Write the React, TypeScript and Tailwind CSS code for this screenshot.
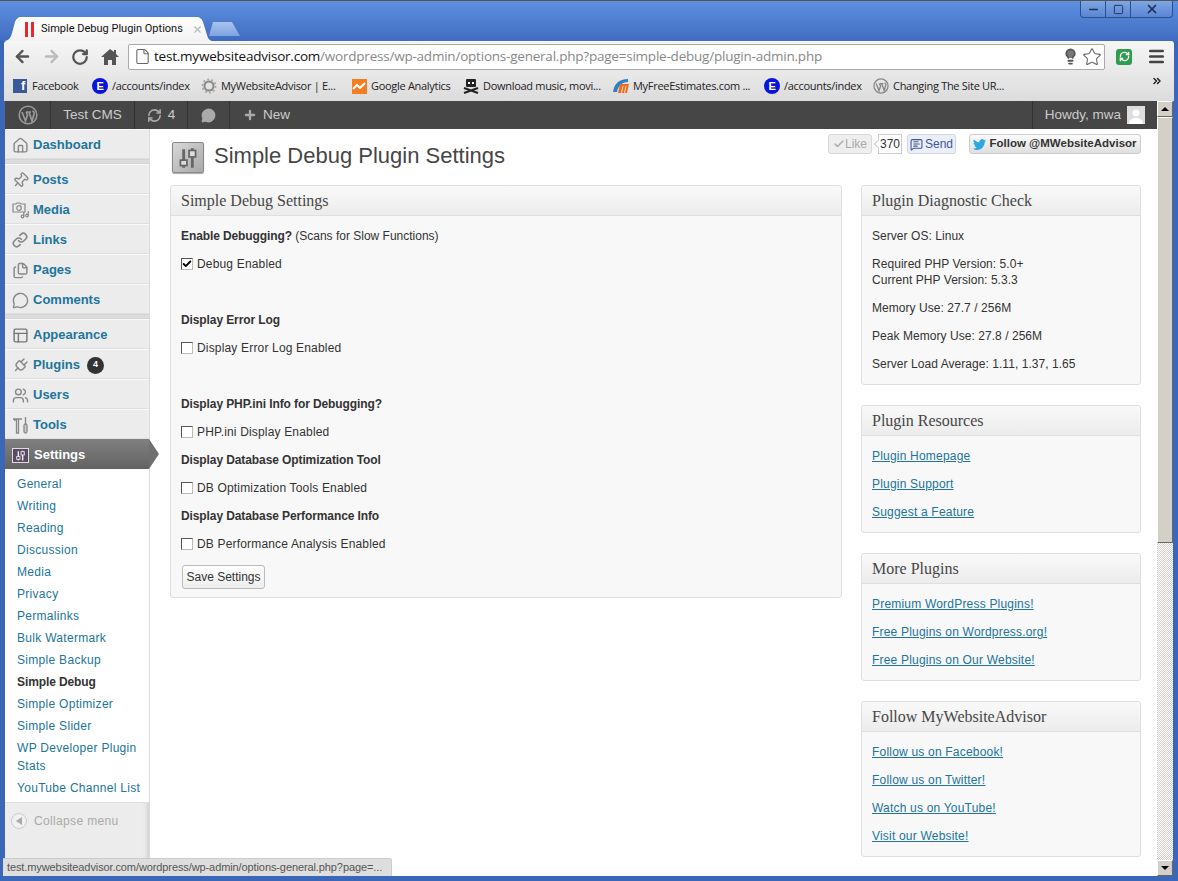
import {
  ArrowLeft,
  ArrowRight,
  RotateCw,
  House,
  File,
  Star,
  Pin,
  Link as LinkIcon,
  Files,
  MessageCircle,
  PanelsTopLeft,
  Plug,
  Users,
  RefreshCw,
  Plus,
  Check,
  MessageSquareText,
  Minus,
  X,
  Square,
  Lightbulb,
  Menu,
  ChevronsRight,
} from "lucide-react"

function WpLogo({ size = 18, color = "#999" }: { size?: number; color?: string }) {
  return (
    <svg width={size} height={size} viewBox="0 0 20 20" fill="none">
      <circle cx="10" cy="10" r="8.8" stroke={color} strokeWidth="1.6" />
      <path d="M4 7l3.5 9 2-6-1.4-3M8 7h5M11 7l3 9 2-7c.3-1.4-.4-2.6-1.6-3" stroke={color} strokeWidth="1.7" />
    </svg>
  )
}

function SliderGlyph({ color, size, knob = "#ddd" }: { color: string; size: number; knob?: string }) {
  return (
    <svg width={size} height={size} viewBox="0 0 24 24" fill="none" stroke={color} strokeWidth="1.6">
      <path d="M8 4v10M8 19v2M16 3v2M16 11v10" strokeWidth="2.6" />
      <rect x="5" y="14" width="6" height="5" fill={knob} />
      <rect x="13" y="5" width="6" height="6" fill={knob} />
    </svg>
  )
}

function MediaIcon() {
  return (
    <svg width="18" height="18" viewBox="0 0 18 18" fill="none" stroke="#888" strokeWidth="1.2">
      <path d="M1 3h3l1-1h3l1 1h4v8H1z" />
      <circle cx="7" cy="7" r="2.300" />
      <circle cx="10.500" cy="15.500" r="1.300" />
      <circle cx="15" cy="14.500" r="1.300" />
      <path d="M11.800 15.500V11M16.300 14.500V10" />
    </svg>
  )
}

function ToolsIcon() {
  return (
    <svg width="18" height="18" viewBox="0 0 18 18" fill="none" stroke="#888" strokeWidth="1.3">
      <path d="M1 3h9M1 3c1 0 2 1 2 2M4.500 3v14h2V3" />
      <path d="M13.500 1v7" />
      <rect x="12" y="8" width="3" height="9" rx="1.500" fill="#ccc" />
    </svg>
  )
}

function Bookmark({ icon, label, className }: { icon: React.ReactNode; label: string; className: string }) {
  return (
    <div className={`flex items-center gap-[4px] shrink-0 ${className}`}>
      <span className="flex w-[16px] h-[16px] items-center justify-center shrink-0">{icon}</span>
      <span className="whitespace-nowrap">{label}</span>
    </div>
  )
}

const EIcon = (
  <span className="flex w-[16px] h-[16px] rounded-full bg-[#0a14d8] text-white text-[11px] font-bold items-center justify-center [font-family:'Liberation_Sans',sans-serif]">
    E
  </span>
)

function MainItem({
  icon,
  label,
  badge,
}: {
  icon: React.ReactNode
  label: string
  badge?: string
}) {
  return (
    <div className="flex items-center h-[30px] pl-[7px] pt-[2px] border-t border-t-[#f9f9f9] border-b border-b-[#dfdfdf] bg-[#ececec]">
      <span className="w-[21px] flex items-center shrink-0">{icon}</span>
      <span className="text-[13px] font-bold text-[#21759b]">{label}</span>
      {badge && (
        <span className="ml-[7px] w-[17px] h-[17px] rounded-full bg-[#333] text-white text-[9px] font-bold flex items-center justify-center">
          {badge}
        </span>
      )}
    </div>
  )
}

function Separator() {
  return <div className="h-[5px] bg-[#dcdcdc] border-y border-y-[#d4d4d4]" />
}

function SubItem({ label, active }: { label: string; active?: boolean }) {
  return (
    <div
      className={`pl-[12px] leading-[18px] py-[2px] text-[12px] ${
        active ? "font-bold text-[#333] tracking-[-0.1px]" : "text-[#21759b] tracking-[0.3px]"
      }`}
    >
      {label}
    </div>
  )
}

function CheckRow({ label, checked }: { label: string; checked?: boolean }) {
  return (
    <div className="flex items-center h-[28px] text-[12px] text-[#333] tracking-[0.17px]">
      <span className="flex items-center justify-center w-[12px] h-[12px] mr-[4px] bg-white border border-[#555] border-r-[#bbb] border-b-[#bbb]">
        {checked && <Check size={10} strokeWidth={4.5} color="#000" />}
      </span>
      {label}
    </div>
  )
}

function Heading({ children }: { children: React.ReactNode }) {
  return <div className="h-[28px] leading-[28px] text-[12px] font-bold text-[#333] tracking-[-0.1px]">{children}</div>
}

function Panel({ title, children }: { title: string; children: React.ReactNode }) {
  return (
    <div className="border border-[#dfdfdf] rounded-[3px] bg-[#f8f8f8] overflow-hidden">
      <div className="h-[30px] leading-[29px] px-[10px] border-b border-[#dfdfdf] bg-gradient-to-b from-[#f9f9f9] to-[#ececec] text-[16px] text-[#464646] [font-family:'Liberation_Serif',serif]">
        {title}
      </div>
      {children}
    </div>
  )
}

function SideBody({ lines }: { lines: string[][] }) {
  return (
    <div className="px-[10px] pt-[12px] text-[12px] leading-[16px] text-[#333] tracking-[0.05px]">
      {lines.map((group) => (
        <p key={group[0]} className="mb-[12px]">
          {group.map((l) => (
            <span key={l} className="block">
              {l}
            </span>
          ))}
        </p>
      ))}
    </div>
  )
}

function SideLinks({ links }: { links: string[] }) {
  return (
    <div className="px-[10px] pt-[12px] text-[12px] leading-[16px] text-[#21759b] tracking-[0.2px]">
      {links.map((l) => (
        <p key={l} className="mb-[12px] underline">
          {l}
        </p>
      ))}
    </div>
  )
}

export default function App() {
  return (
    <div className="w-[1178px] h-[881px] overflow-hidden relative flex flex-col bg-[#3a67b8] [font-family:'Liberation_Sans',sans-serif]">
      {/* Title strip */}
      <div className="h-[41px] shrink-0 bg-gradient-to-b from-[#5f90e0] to-[#3f6cc0] border-t border-t-[#555] relative flex items-end pl-[4px]">
        <div className="w-[209px] h-[24px] bg-gradient-to-b from-[#ffffff] to-[#f2f2f2] [clip-path:path('M0,24C5,24,7,20,8,16L11,5C12,2,14,0,17,0L192,0C196,0,198,2,199,5L203,18C204,22,206,24,209,24Z')] flex items-center pl-[21px] text-[11px] text-[#111] [font-family:Roboto,sans-serif]">
          <span className="flex gap-[3px] mr-[7px] shrink-0">
            <span className="w-[3px] h-[15px] bg-[#e8262b]" />
            <span className="w-[3px] h-[15px] bg-[#e8262b]" />
          </span>
          <span className="whitespace-nowrap">Simple Debug Plugin Options</span>
          <span className="ml-[9px] text-[#bbb] shrink-0">
            <X size={11} strokeWidth={2.5} />
          </span>
        </div>
        <div className="w-[31px] h-[14px] mb-[5px] -ml-[4px] bg-gradient-to-b from-[#a8c4ee] to-[#7ea3e0] [clip-path:polygon(0_100%,4px_0,23px_0,31px_100%)]" />

        {/* Window buttons */}
        <div className="absolute top-0 right-[5px] flex h-[17px] border border-t-0 border-[#2c4f8f] rounded-b-[4px] bg-gradient-to-b from-[#7fa6e4] to-[#5a86d2] text-[#223]">
          <span className="w-[25px] flex items-end justify-center border-r border-[#2c4f8f] pb-[1px]">
            <Minus size={13} strokeWidth={3} color="#1e2f55" />
          </span>
          <span className="w-[25px] flex items-center justify-center border-r border-[#2c4f8f]">
            <Square size={11} strokeWidth={2} color="#1e2f55" />
          </span>
          <span className="w-[41px] flex items-center justify-center">
            <X size={14} strokeWidth={3} color="#1e2f55" />
          </span>
        </div>
      </div>

      {/* Browser chrome */}
      <div className="mx-[4px] shrink-0 rounded-t-[3px] bg-gradient-to-b from-[#f6f6f6] to-[#dcdcdc]">
        <div className="h-[31px] flex items-center pl-[9px]">
          <ArrowLeft size={19} strokeWidth={3} color="#555" className="shrink-0" />
          <ArrowRight size={19} strokeWidth={3} color="#bbb" className="shrink-0 ml-[10px]" />
          <RotateCw size={18} strokeWidth={3} color="#555" className="shrink-0 ml-[10px]" />
          <svg width="18" height="18" viewBox="0 0 18 18" fill="#555" className="shrink-0 ml-[12px]">
            <path d="M9 1L0 9h3v8h4v-5h4v5h4V9h3l-3-3V2h-2v2z" />
          </svg>
          <div className="ml-[9px] w-[977px] shrink-0 h-[26px] bg-white border border-[#aaa] rounded-[2px] flex items-center pl-[5px] pr-[2px] text-[13.5px] [font-family:'Open_Sans',sans-serif]">
            <File size={17} strokeWidth={1.5} color="#666" className="shrink-0 mr-[3px]" />
            <span className="whitespace-nowrap tracking-[-0.22px] text-[#111]">
              test.mywebsiteadvisor.com
              <span className="text-[#888]">/wordpress/wp-admin/options-general.php?page=simple-debug/plugin-admin.php</span>
            </span>
            <span className="ml-auto flex items-center gap-[3px]">
              <Lightbulb size={17} strokeWidth={2.5} color="#555" fill="#777" />
              <Star size={20} strokeWidth={1.3} color="#666" />
            </span>
          </div>
          <span className="ml-[11px] w-[16px] h-[16px] rounded-[3px] bg-[#2e9d4e] flex items-center justify-center shrink-0">
            <RefreshCw size={11} strokeWidth={3} color="#fff" />
          </span>
          <Menu size={19} strokeWidth={3} color="#444" className="ml-[15px] shrink-0" />
        </div>
        <div className="h-[29px] flex items-center pb-[1px] pl-[8px] text-[11px] text-[#222] relative [font-family:'Open_Sans',sans-serif] tracking-[-0.3px]">
          <Bookmark
            className="w-[80px]"
            label="Facebook"
            icon={
              <span className="w-[14px] h-[14px] bg-[#3b5998] text-white text-[13px] font-bold flex items-end justify-end pr-[2px] leading-[14px] [font-family:'Liberation_Sans',sans-serif]">
                f
              </span>
            }
          />
          <Bookmark className="w-[109px]" label="/accounts/index" icon={EIcon} />
          <Bookmark
            className="w-[150px]"
            label="MyWebsiteAdvisor | E..."
            icon={
              <svg width="16" height="16" viewBox="0 0 16 16" fill="none">
                <circle cx="8" cy="8" r="4.5" stroke="#888" strokeWidth="2" />
                <circle cx="8" cy="8" r="6.5" stroke="#aaa" strokeWidth="2" strokeDasharray="2 2" />
              </svg>
            }
          />
          <Bookmark
            className="w-[112px]"
            label="Google Analytics"
            icon={
              <svg width="15" height="15" viewBox="0 0 15 15">
                <rect width="15" height="15" fill="#f57c1f" />
                <path d="M1 10l4-4 3 3 5-5" stroke="#fff" strokeWidth="2" fill="none" />
              </svg>
            }
          />
          <Bookmark
            className="w-[150px]"
            label="Download music, movi..."
            icon={
              <svg width="16" height="16" viewBox="0 0 16 16">
                <rect x="3" y="1" width="10" height="8" rx="1" fill="#222" />
                <rect x="5" y="4" width="2" height="2" fill="#fff" />
                <rect x="9" y="4" width="2" height="2" fill="#fff" />
                <path d="M1 10l14 5M15 10L1 15" stroke="#222" strokeWidth="2" />
              </svg>
            }
          />
          <Bookmark
            className="w-[151px]"
            label="MyFreeEstimates.com ..."
            icon={
              <svg width="16" height="16" viewBox="0 0 16 16">
                <path d="M0 14C1 6 6 1 15 1v3C9 4 5 8 4 14z" fill="#2f7fc4" />
                <path d="M5 15l2-9h9l-2 9h-2l1.500-7h-1l-1.500 7H9l1.500-7h-1L8 15z" fill="#f26a1b" />
              </svg>
            }
          />
          <Bookmark className="w-[109px]" label="/accounts/index" icon={EIcon} />
          <Bookmark className="w-[140px]" label="Changing The Site UR..." icon={<WpLogo size={16} color="#888" />} />
          <ChevronsRight size={12} strokeWidth={3} color="#222" className="absolute right-[11px] top-[3px]" />
        </div>
      </div>

      {/* Page + scrollbar */}
      <div className="mx-[5px] mb-[5px] h-[775px] flex bg-white relative">
        <div className="w-[1152px] flex flex-col">
          {/* Admin bar */}
          <div className="h-[28px] bg-[#464646] flex items-center text-[13.5px] text-[#cccccc] shrink-0">
            <div className="w-[46px] h-full flex items-center justify-center border-r border-[#333]">
              <WpLogo size={20} />
            </div>
            <div className="w-[84px] h-full flex items-center justify-center border-r border-[#333]">Test CMS</div>
            <div className="w-[53px] h-full flex items-center justify-center gap-[6px] border-r border-[#333]">
              <RefreshCw size={15} strokeWidth={2.5} color="#aaa" />4
            </div>
            <div className="w-[42px] h-full flex items-center justify-center border-r border-[#333]">
              <MessageCircle size={15} color="#aaa" fill="#aaa" />
            </div>
            <div className="flex items-center pl-[13px] gap-[6px]">
              <Plus size={14} strokeWidth={4} color="#aaa" />
              New
            </div>
            <div className="ml-auto h-full flex items-center gap-[6px] pl-[12px] pr-[12px] border-l border-[#333]">
              Howdy, mwa
              <span className="w-[18px] h-[18px] bg-[#ddd] flex items-end justify-center overflow-hidden">
                <svg width="16" height="16" viewBox="0 0 16 16" fill="#fff">
                  <circle cx="8" cy="5" r="3.500" />
                  <path d="M1 16c0-4 3-6 7-6s7 2 7 6z" />
                </svg>
              </span>
            </div>
          </div>

          <div className="flex flex-1 min-h-0">
            {/* Sidebar */}
            <aside className="w-[145px] shrink-0 bg-[#ececec] flex flex-col border-r border-[#dcdcdc] shadow-[inset_-6px_0_6px_-6px_#bbb] text-[12px]">
              <MainItem icon={<House size={17} color="#888" />} label="Dashboard" />
              <Separator />
              <MainItem icon={<Pin size={17} color="#888" className="rotate-45" />} label="Posts" />
              <MainItem icon={<MediaIcon />} label="Media" />
              <MainItem icon={<LinkIcon size={16} strokeWidth={2.5} color="#888" />} label="Links" />
              <MainItem icon={<Files size={17} color="#888" />} label="Pages" />
              <MainItem icon={<MessageCircle size={17} color="#888" />} label="Comments" />
              <Separator />
              <MainItem icon={<PanelsTopLeft size={17} color="#777" />} label="Appearance" />
              <MainItem icon={<Plug size={17} color="#888" className="rotate-45" />} label="Plugins" badge="4" />
              <MainItem icon={<Users size={17} color="#888" />} label="Users" />
              <MainItem icon={<ToolsIcon />} label="Tools" />
              <div className="relative h-[30px] flex items-center pl-[7px] pt-[2px] bg-gradient-to-b from-[#808080] to-[#636363] text-white text-[13px] font-bold">
                <span className="w-[17px] h-[15px] bg-[#5b4a63] border border-[#ddd] flex items-center justify-center mr-[5px]">
                  <SliderGlyph color="#eee" size={13} knob="#5b4a63" />
                </span>
                <span>Settings</span>
                <span className="absolute left-full top-0 h-[30px] w-[10px] bg-[#6f6f6f] [clip-path:polygon(0_0,100%_50%,0_100%)] z-10" />
              </div>
              <div className="bg-white pt-[4px] pb-[3px] border-b border-[#dfdfdf]">
                <SubItem label="General" />
                <SubItem label="Writing" />
                <SubItem label="Reading" />
                <SubItem label="Discussion" />
                <SubItem label="Media" />
                <SubItem label="Privacy" />
                <SubItem label="Permalinks" />
                <SubItem label="Bulk Watermark" />
                <SubItem label="Simple Backup" />
                <SubItem label="Simple Debug" active />
                <SubItem label="Simple Optimizer" />
                <SubItem label="Simple Slider" />
                <SubItem label="WP Developer Plugin Stats" />
                <SubItem label="YouTube Channel List" />
              </div>
              <div className="flex items-center pl-[6px] mt-[9px] gap-[7px] text-[12px] text-[#aaa] tracking-[0.35px]">
                <span className="w-[16px] h-[16px] rounded-full border border-[#ccc] bg-[#f1f1f1] flex items-center justify-center">
                  <span className="w-[6px] h-[8px] bg-[#aaa] [clip-path:polygon(100%_0,100%_100%,0_50%)]" />
                </span>
                Collapse menu
              </div>
            </aside>

            {/* Content */}
            <main className="flex-1 min-w-0 pl-[20px] pr-[16px] pt-[5px]">
              <div className="h-[51px] flex items-start justify-between">
                <div className="flex items-start pl-[2px] pt-[8px]">
                  <span className="w-[32px] h-[31px] rounded-[2px] border border-[#888] bg-gradient-to-br from-[#d8d8d8] to-[#a8a8a8] flex items-center justify-center shadow-[0_1px_1px_#aaa]">
                    <SliderGlyph color="#666" size={26} />
                  </span>
                  <h1 className="ml-[10px] text-[22px] leading-[28px] text-[#464646]">Simple Debug Plugin Settings</h1>
                </div>
                <div className="flex items-center text-[12px]">
                  <span className="w-[44px] h-[20px] flex items-center justify-center rounded-[3px] border border-[#d8d8d8] bg-[#eeeeee] text-[#aaa]">
                    <Check size={12} strokeWidth={3} color="#aaa" />
                    Like
                  </span>
                  <span className="relative ml-[6px] w-[24px] h-[20px] flex items-center justify-center border border-[#ccc] bg-white text-[#333]">
                    <span className="absolute left-[-4px] top-[6px] w-[6px] h-[6px] rotate-45 bg-white border-l border-b border-[#ccc]" />
                    370
                  </span>
                  <span className="ml-[5px] w-[49px] h-[20px] flex items-center justify-center gap-[2px] rounded-[3px] border border-[#cdd6e8] bg-[#eceef8] text-[#3b5998]">
                    <MessageSquareText size={13} color="#3b5998" />
                    Send
                  </span>
                  <span className="ml-[13px] w-[172px] h-[20px] flex items-center justify-center gap-[3px] rounded-[3px] border border-[#ccc] bg-gradient-to-b from-[#fbfbfb] to-[#dfdfdf] text-[#333] text-[11.5px] font-bold whitespace-nowrap">
                    <svg width="13" height="11" viewBox="0 0 24 20" fill="#2aa9e0">
                      <path d="M24 2.400c-.9.400-1.800.700-2.800.800 1-.6 1.800-1.600 2.200-2.700-1 .6-2 1-3.100 1.200A4.900 4.900 0 0 0 11.900 6.100C7.800 5.900 4.200 3.900 1.700.900A4.900 4.900 0 0 0 3.200 7.500c-.8 0-1.600-.2-2.200-.6 0 2.400 1.700 4.400 3.900 4.900-.7.200-1.500.2-2.200.1.600 2 2.400 3.400 4.600 3.400A9.900 9.900 0 0 1 0 17.800 14 14 0 0 0 7.500 20c9.100 0 14.300-7.700 14-14.600 1-.7 1.800-1.600 2.500-3z" />
                    </svg>
                    Follow @MWebsiteAdvisor
                  </span>
                </div>
              </div>

              <div className="flex items-start gap-[19px]">
                <div className="w-[672px] shrink-0">
                  <Panel title="Simple Debug Settings">
                    <div className="px-[10px] pt-[6px] pb-[8px]">
                      <Heading>
                        Enable Debugging? <span className="font-normal tracking-normal">(Scans for Slow Functions)</span>
                      </Heading>
                      <CheckRow label="Debug Enabled" checked />
                      <div className="h-[28px]" />
                      <Heading>Display Error Log</Heading>
                      <CheckRow label="Display Error Log Enabled" />
                      <div className="h-[28px]" />
                      <Heading>Display PHP.ini Info for Debugging?</Heading>
                      <CheckRow label="PHP.ini Display Enabled" />
                      <Heading>Display Database Optimization Tool</Heading>
                      <CheckRow label="DB Optimization Tools Enabled" />
                      <Heading>Display Database Performance Info</Heading>
                      <CheckRow label="DB Performance Analysis Enabled" />
                      <button className="block ml-[1px] mt-[7px] h-[24px] px-[3px] w-[83px] rounded-[3px] border border-[#bbb] bg-gradient-to-b from-white to-[#eeeeee] text-[12px] text-[#333]">
                        Save Settings
                      </button>
                    </div>
                  </Panel>
                </div>

                <div className="w-[280px] shrink-0 flex flex-col gap-[20px]">
                  <Panel title="Plugin Diagnostic Check">
                    <SideBody
                      lines={[
                        ["Server OS: Linux"],
                        ["Required PHP Version: 5.0+", "Current PHP Version: 5.3.3"],
                        ["Memory Use: 27.7 / 256M"],
                        ["Peak Memory Use: 27.8 / 256M"],
                        ["Server Load Average: 1.11, 1.37, 1.65"],
                      ]}
                    />
                  </Panel>
                  <Panel title="Plugin Resources">
                    <SideLinks links={["Plugin Homepage", "Plugin Support", "Suggest a Feature"]} />
                  </Panel>
                  <Panel title="More Plugins">
                    <SideLinks
                      links={["Premium WordPress Plugins!", "Free Plugins on Wordpress.org!", "Free Plugins on Our Website!"]}
                    />
                  </Panel>
                  <Panel title="Follow MyWebsiteAdvisor">
                    <SideLinks
                      links={["Follow us on Facebook!", "Follow us on Twitter!", "Watch us on YouTube!", "Visit our Website!"]}
                    />
                  </Panel>
                </div>
              </div>
            </main>
          </div>
        </div>

        {/* Scrollbar */}
        <div className="w-[16px] shrink-0 flex flex-col bg-[repeating-conic-gradient(#d4d0c8_0_25%,#ffffff_0_50%)] bg-[length:2px_2px]">
          <div className="h-[16px] bg-[#d4d0c8] border border-t-white border-l-white border-r-[#666] border-b-[#666] flex items-center justify-center">
            <span className="w-[8px] h-[4px] bg-black [clip-path:polygon(50%_0,100%_100%,0_100%)]" />
          </div>
          <div className="h-[426px] bg-[#d4d0c8] border border-t-white border-l-white border-r-[#666] border-b-[#666]" />
          <div className="mt-auto h-[16px] bg-[#d4d0c8] border border-t-white border-l-white border-r-[#666] border-b-[#666] flex items-center justify-center">
            <span className="w-[8px] h-[4px] bg-black [clip-path:polygon(0_0,100%_0,50%_100%)]" />
          </div>
        </div>

        {/* Status bubble */}
        <div className="absolute left-[-2px] bottom-0 w-[389px] h-[18px] bg-[#dedede] rounded-tr-[3px] border-t border-r border-[#ccc] pl-[4px] leading-[17px] text-[11px] text-[#555] tracking-[-0.1px] whitespace-nowrap overflow-hidden">
          test.mywebsiteadvisor.com/wordpress/wp-admin/options-general.php?page=...
        </div>
      </div>
    </div>
  )
}
